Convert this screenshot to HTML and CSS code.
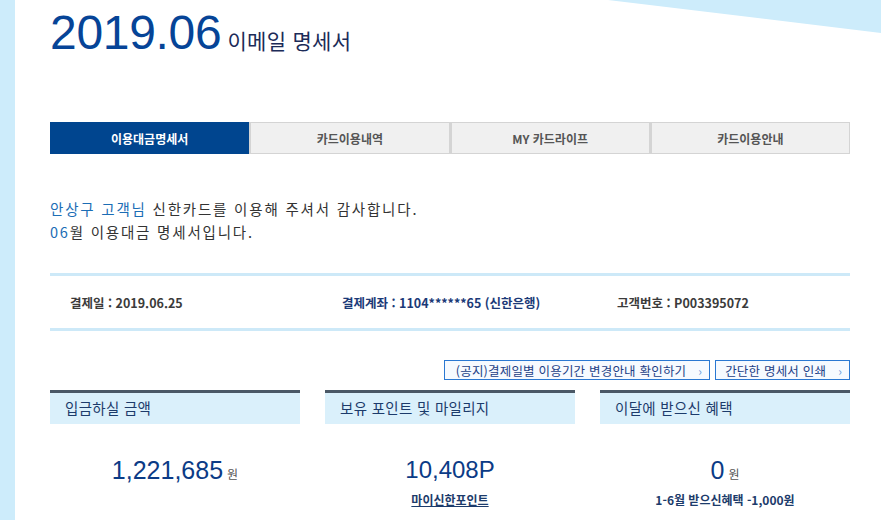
FILE: index.html
```html
<!DOCTYPE html>
<html lang="ko">
<head>
<meta charset="utf-8">
<title>2019.06 이메일 명세서</title>
<link rel="stylesheet" href="styles.css">
</head>
<body>
<div class="page">
  <svg class="corner" width="273" height="33" viewBox="0 0 273 33" aria-hidden="true"><polygon points="0,0 273,0 273,33" fill="#cdecfb"/></svg>
  <header class="head">
    <h1 class="title"><span class="ym">2019.06</span><span class="sub">이메일 명세서</span></h1>
  </header>
  <nav class="tabs">
    <a class="tab active">이용대금명세서</a>
    <a class="tab">카드이용내역</a>
    <a class="tab">MY 카드라이프</a>
    <a class="tab">카드이용안내</a>
  </nav>
  <p class="greet"><span class="hl">안상구 고객님</span> 신한카드를 이용해 주셔서 감사합니다.<br><span class="hl">06</span>월 이용대금 명세서입니다.</p>
  <div class="info">
    <span class="i1">결제일 : 2019.06.25</span>
    <span class="i2">결제계좌 : 1104******65 (신한은행)</span>
    <span class="i3">고객번호 : P003395072</span>
  </div>
  <div class="btns">
    <a class="btn">(공지)결제일별 이용기간 변경안내 확인하기<span class="chev">›</span></a>
    <a class="btn">간단한 명세서 인쇄<span class="chev">›</span></a>
  </div>
  <div class="cards">
    <section class="card">
      <h2 class="ch">입금하실 금액</h2>
      <div class="val"><span class="num">1,221,685</span><span class="unit">원</span></div>
    </section>
    <section class="card">
      <h2 class="ch">보유 포인트 및 마일리지</h2>
      <div class="val"><span class="num pt">10,408P</span></div>
      <a class="note link">마이신한포인트</a>
    </section>
    <section class="card">
      <h2 class="ch">이달에 받으신 혜택</h2>
      <div class="val"><span class="num">0</span><span class="unit">원</span></div>
      <p class="note">1-6월 받으신혜택 -1,000원</p>
    </section>
  </div>
</div>
</body>
</html>
```
FILE: styles.css
```css
html, body { margin: 0; padding: 0; background: #fff; }
body { font-family: "Noto Sans CJK KR", "Liberation Sans", sans-serif; color: #333; }
.page {
  position: relative;
  width: 800px;
  min-height: 520px;
  border-left: 15px solid #cdecfb;
  padding: 0 31px 0 35px;
  overflow: hidden;
}
.corner { position: absolute; top: 0; right: 0; }
.head { padding-top: 9px; height: 122px; box-sizing: border-box; }
.title { margin: 0; display: flex; align-items: baseline; font-weight: normal; }
.ym { font-family: "Liberation Sans", Arial, sans-serif; font-size: 48px; line-height: 48px; color: #064497; letter-spacing: -0.3px; }
.sub { font-size: 21px; color: #1c2b58; margin-left: 6px; letter-spacing: 0.3px; }
.tabs { display: flex; height: 32px; }
.tab {
  flex: 1; display: flex; align-items: center; justify-content: center;
  font-size: 12px; font-weight: bold; color: #555;
  background: #f0f0f0; border: 1px solid #d4d4d4;
  box-sizing: border-box;
}
.tab + .tab { border-left: 2px solid #d4d4d4; }
.tab.active { background: #00458f; border-color: #00458f; color: #fff; }
.greet { margin: 43px 0 0; font-size: 14.5px; line-height: 23px; color: #333; letter-spacing: 1.8px; }
.hl { color: #1b6db5; }
.info {
  margin-top: 30px; height: 58px; box-sizing: border-box;
  border-top: 3px solid #cde9f8; border-bottom: 3px solid #cde9f8;
  display: flex; align-items: center; font-size: 12.5px; font-weight: bold;
}
.i1 { margin-left: 20px; width: 272px; color: #3b3b3b; }
.i2 { width: 275px; color: #1b3a78; }
.i3 { color: #3b3b3b; }
.btns { display: flex; justify-content: flex-end; gap: 5px; margin-top: 29px; height: 20px; }
.btn {
  display: flex; align-items: center; box-sizing: border-box; height: 20px;
  border: 1px solid #2a78d2; background: #f6faff; color: #1d3f86;
  font-size: 12.5px; padding: 0 7px 0 11px; letter-spacing: 0.2px;
}
.btn + .btn { padding-left: 9px; }
.chev { color: #6b9ddb; margin-left: 12px; font-size: 12px; }
.cards { display: flex; gap: 25px; margin-top: 10px; }
.card { flex: 1; text-align: center; }
.ch {
  margin: 0; height: 34px; box-sizing: border-box; border-top: 3px solid #4a5866;
  background: #daf0fb; text-align: left; padding-left: 15px;
  font-size: 14.5px; font-weight: normal; color: #1c3b6b; line-height: 30px; letter-spacing: 0.3px;
}
.val { margin-top: 30px; height: 32px; display: flex; justify-content: center; align-items: baseline; }
.num { font-family: "Liberation Sans", Arial, sans-serif; font-size: 25px; line-height: 32px; color: #0b3b86; }
.num.pt { font-size: 24px; }
.unit { font-size: 12px; color: #555; margin-left: 4px; }
.note { display: inline-block; margin: 0; font-size: 12px; font-weight: bold; color: #1c3b6b; line-height: 16px; }
.link { text-decoration: underline; }
```
